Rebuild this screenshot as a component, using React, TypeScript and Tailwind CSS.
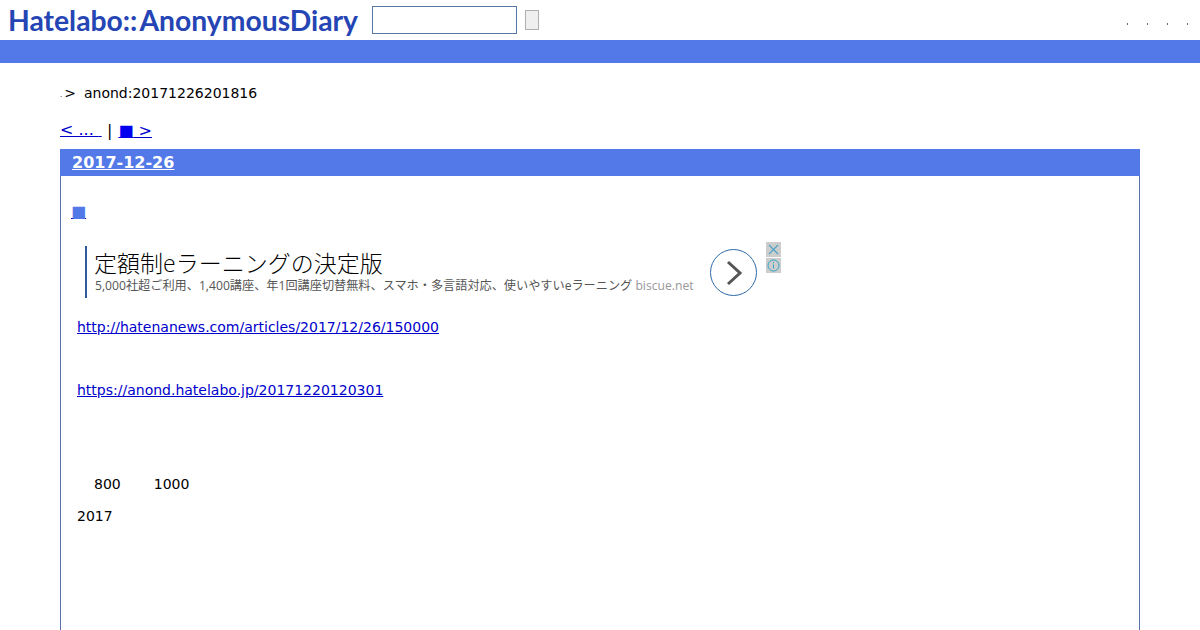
export default function App() {
  const dejavu = "font-['DejaVu_Sans',sans-serif]";
  return (
    <div className={`h-[630px] overflow-hidden bg-white text-[14px] leading-[18px] text-black ${dejavu}`}>
      <header className="flex h-10 items-start">
        <div className="ml-2 mt-[2px] w-[350px] whitespace-nowrap font-['Lato',sans-serif] text-[28.3px] font-bold leading-[36px] text-[#2545b5]">
          Hatelabo::<span className="ml-[2px]">AnonymousDiary</span>
        </div>
        <div className="ml-[14px] mt-1.5 h-7 w-[145px] border border-[#5b76a8] bg-white" />
        <div className="ml-2 mt-2.5 h-5 w-3.5 border border-[#b0b0b0] bg-[#efefef]" />
        <div className="ml-auto mr-3 mt-[23px] flex gap-[19px]">
          <span className="h-0.5 w-px bg-[#666]" />
          <span className="h-0.5 w-px bg-[#666]" />
          <span className="h-0.5 w-px bg-[#666]" />
          <span className="h-0.5 w-px bg-[#666]" />
        </div>
      </header>
      <div className="h-[23px] bg-[#5279e7]" />
      <main className="px-[60px]">
        <div className="mt-[21px] flex h-[18px] items-center whitespace-nowrap">
          <span className="mt-1 text-[7px]">.</span>
          <span className="ml-[2px]">&gt;</span>
          <span className="ml-[8px]">anond:20171226201816</span>
        </div>
        <div className="mt-[20px] flex h-[18px] items-center whitespace-pre text-[16px]">
          <a href="#" className="w-[42px] text-[#0000cc] underline">&lt; ... <span className="text-[9px]"> </span></a>
          <span className="ml-[5px]">|</span>
          <a href="#" className="ml-[6px] text-[#0000cc] underline"><span className="text-[#0000ee]">■</span> &gt;</a>
        </div>
        <section className="mt-[9px] h-[600px] border-x border-[#5a73ad]">
          <h2 className="-mx-px flex h-[27px] items-center bg-[#5279e7] pl-3 text-[16px] font-bold text-white">
            <a href="#" className="underline">2017-12-26</a>
          </h2>
          <div className="pl-[10px] pt-[27px]">
            <a href="#" className="block h-[18px] w-fit text-[16px] text-[#5279e7] underline decoration-[#0000cc]">■ </a>
          </div>
          <div className="ml-6 mt-[21px] flex h-14 w-[696px] items-start">
            <div className="mt-[4px] h-[52px] w-[2px] bg-[#2f5a9e]" />
            <div className="ml-2 mt-[7px] whitespace-nowrap font-['Open_Sans','Noto_Sans_CJK_JP',sans-serif]">
              <div className="-ml-px text-[23px] font-light leading-[28px] text-black">定額制eラーニングの決定版</div>
              <div className="mt-[1px] text-[12.16px] leading-[16px] text-[#555]">
                5,000社超ご利用、1,400講座、年1回講座切替無料、スマホ・多言語対応、使いやすいeラーニング <span className="text-[#999]">biscue.net</span>
              </div>
            </div>
            <div className="ml-auto flex items-start">
              <div className="mt-[7px] flex h-[47px] w-[47px] items-center justify-center rounded-full border border-[#2f6aa8]">
                <svg width="18" height="26" viewBox="0 0 18 26" fill="none" stroke="#555" strokeWidth="3">
                  <path d="M3 2l12 11L3 24" />
                </svg>
              </div>
              <div className="ml-[9px] flex w-[15px] flex-col">
                <div className="flex h-[15px] items-center justify-center bg-[#cdcdcd]">
                  <svg width="11" height="11" viewBox="0 0 11 11" fill="none" stroke="#4aa3c7" strokeWidth="1.1">
                    <path d="M1 1l9 9M10 1l-9 9" />
                  </svg>
                </div>
                <div className="mt-px flex h-[15px] items-center justify-center bg-[#cdcdcd]">
                  <svg width="13" height="13" viewBox="0 0 13 13" fill="none" stroke="#2fa3c7" strokeWidth="1">
                    <circle cx="6.5" cy="6.5" r="5.5" />
                    <path d="M6.5 5.5v4M6.5 3v1.2" />
                  </svg>
                </div>
              </div>
            </div>
          </div>
          <div className="pl-4">
            <p className="mt-[20px] h-[18px]"><a href="#" className="text-[#0000cc] underline">http://hatenanews.com/articles/2017/12/26/150000</a></p>
            <p className="mt-[45px] h-[18px]"><a href="#" className="text-[#0000cc] underline">https://anond.hatelabo.jp/20171220120301</a></p>
            <p className="mt-[76px] flex h-[18px] pl-[17px]"><span>800</span><span className="ml-[33px]">1000</span></p>
            <p className="mt-[14px] h-[18px]">2017</p>
          </div>
        </section>
      </main>
    </div>
  );
}
